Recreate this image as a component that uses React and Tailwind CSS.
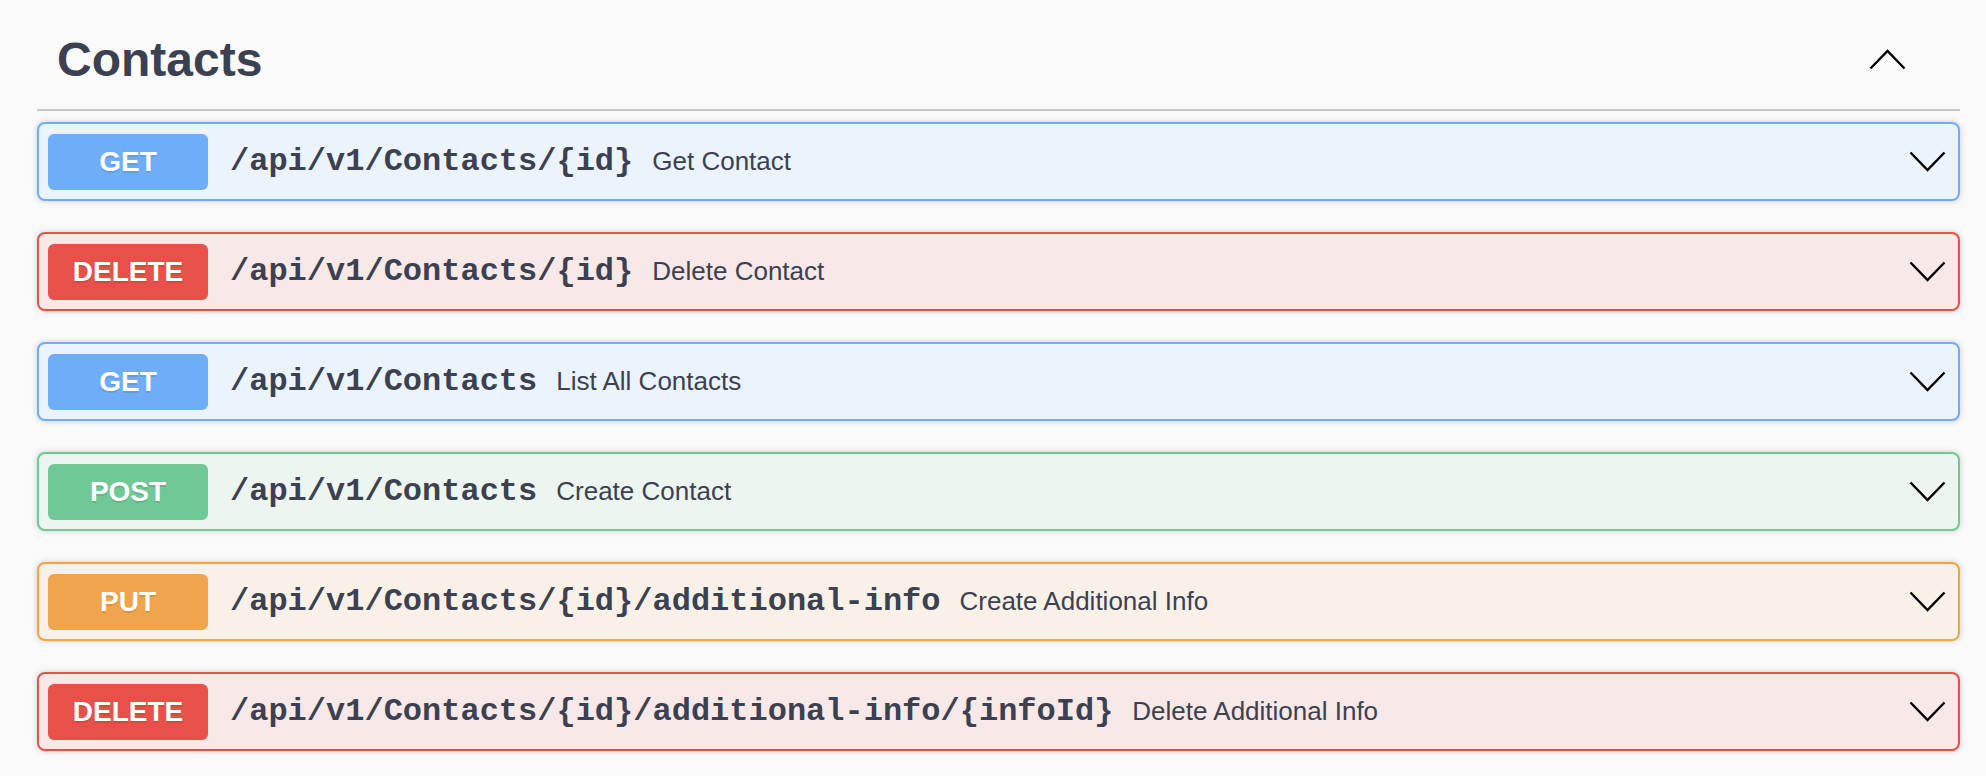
import React from 'react'

const sans = { fontFamily: '"Liberation Sans", Arial, sans-serif' }
const mono = { fontFamily: '"Liberation Mono", "Courier New", monospace' }

const styles = {
  GET: { row: 'bg-[#ebf3fc] border-[#6eaef8]', badge: 'bg-[#6eaef8]' },
  DELETE: { row: 'bg-[#f8e8e8] border-[#e8504a]', badge: 'bg-[#e8504a]' },
  POST: { row: 'bg-[#ecf5f0] border-[#6fc895]', badge: 'bg-[#6fc895]' },
  PUT: { row: 'bg-[#f9f1e7] border-[#f0a44b]', badge: 'bg-[#f0a44b]' },
}

const ops = [
  { method: 'GET', path: '/api/v1/Contacts/{id}', summary: 'Get Contact' },
  { method: 'DELETE', path: '/api/v1/Contacts/{id}', summary: 'Delete Contact' },
  { method: 'GET', path: '/api/v1/Contacts', summary: 'List All Contacts' },
  { method: 'POST', path: '/api/v1/Contacts', summary: 'Create Contact' },
  { method: 'PUT', path: '/api/v1/Contacts/{id}/additional-info', summary: 'Create Additional Info' },
  { method: 'DELETE', path: '/api/v1/Contacts/{id}/additional-info/{infoId}', summary: 'Delete Additional Info' },
]

function Chevron({ up }) {
  return (
    <svg width="37" height="21" viewBox="0 0 37 21" fill="none" stroke="#000" strokeWidth="2.4">
      <polyline points={up ? '1.5,19.5 18.5,2 35.5,19.5' : '1.5,1.5 18.5,19 35.5,1.5'} />
    </svg>
  )
}

function Operation({ method, path, summary }) {
  const s = styles[method]
  return (
    <div className={`flex items-center h-[79px] mb-[31px] pl-[9px] pr-[12px] border-2 rounded-[8px] shadow-[0_0_6px_rgba(0,0,0,0.19)] ${s.row}`}>
      <span
        className={`flex items-center justify-center w-[160px] h-[56px] rounded-[6px] text-white font-bold text-[28px] [text-shadow:0_2px_0_rgba(0,0,0,0.1)] ${s.badge}`}
        style={sans}
      >
        {method}
      </span>
      <span className="ml-[22px] text-[32px] font-bold text-[#3b4151]" style={mono}>{path}</span>
      <span className="ml-[19px] text-[26px] text-[#3b4151]" style={sans}>{summary}</span>
      <span className="ml-auto flex items-center">
        <Chevron />
      </span>
    </div>
  )
}

export default function App() {
  return (
    <div className="min-h-screen bg-[#fafafa] pl-[37px] pr-[26px]" style={sans}>
      <div className="flex items-center justify-between h-[109px] pt-[10px] pl-[20px] pr-[54px]">
        <h3 className="text-[48px] font-bold text-[#3b4151]">Contacts</h3>
        <Chevron up />
      </div>
      <div className="h-[2px] bg-[#c6c7cb]" />
      <div className="mt-[11px]">
        {ops.map((op, i) => (
          <Operation key={i} {...op} />
        ))}
      </div>
    </div>
  )
}
